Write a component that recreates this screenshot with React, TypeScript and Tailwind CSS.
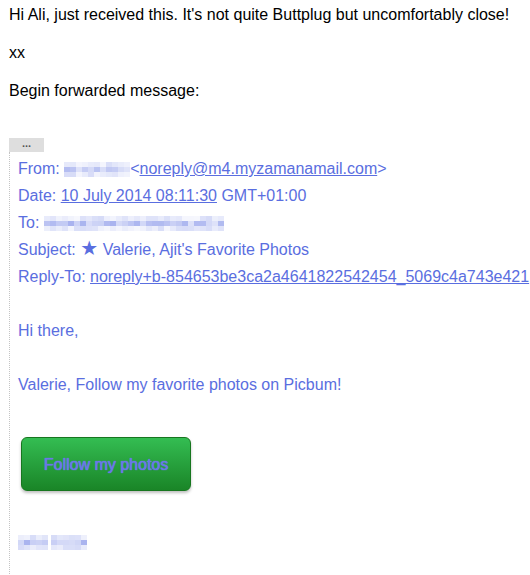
const BLUE = "text-[#5a6ee0]";

// blocky "pixelated" redaction, drawn as small squares
function Pixelated({ cols, rows, seed, cw = 6, ch = 5, className }: { cols: number; rows: number; seed: number; cw?: number; ch?: number; className?: string }) {
  const cells: { x: number; y: number; o: number }[] = [];
  let s = seed;
  for (let y = 0; y < rows; y++) {
    for (let x = 0; x < cols; x++) {
      s = (s * 9301 + 49297) % 233280;
      const r = s / 233280;
      const edge = y === 0 || y === rows - 1;
      cells.push({ x, y, o: edge ? 0.05 + r * 0.2 : 0.18 + r * 0.35 });
    }
  }
  return (
    <svg width={cols * cw} height={rows * ch} className={className}>
      {cells.map((c, i) => (
        <rect key={i} x={c.x * cw} y={c.y * ch} width={cw} height={ch} fill="#5a6ee0" opacity={c.o} />
      ))}
    </svg>
  );
}

export default function App() {
  return (
    <div className="h-[575px] w-[530px] overflow-hidden bg-white font-['Helvetica','Liberation_Sans',Arial,sans-serif] text-[16px] text-black">
      <div className="pl-[9px] pt-[5px] leading-[19px]">
        <div>Hi Ali, just received this. It's not quite Buttplug but uncomfortably close!</div>
        <div>&nbsp;</div>
        <div>xx</div>
        <div>&nbsp;</div>
        <div>Begin forwarded message:</div>
      </div>

      <div className="ml-[9px] mt-[38px] flex h-[14px] w-[35px] items-start justify-center bg-[#dedede] text-[11px] font-bold leading-[10px] text-[#555]">
        ...
      </div>

      <div className={`ml-[9px] h-[600px] whitespace-nowrap border-l border-dotted border-[#c4c4c4] pl-[8px] pt-[3px] leading-[27px] ${BLUE}`}>
        <div className="flex items-center">
          From:&nbsp;
          <Pixelated cols={11} rows={3} seed={7} className="mt-[1px]" />
          <span>&lt;</span>
          <span className="underline">noreply@m4.myzamanamail.com</span>
          <span>&gt;</span>
        </div>
        <div>
          Date: <span className="underline">10 July 2014 08:11:30</span> GMT+01:00
        </div>
        <div className="flex items-center">
          To:&nbsp;
          <Pixelated cols={30} rows={3} seed={31} className="mt-[2px]" />
        </div>
        <div>
          Subject: <span className="font-['DejaVu_Sans',sans-serif] text-[20px] leading-none">★</span> Valerie, Ajit's Favorite Photos
        </div>
        <div>
          Reply-To: <span className="underline">noreply+b-854653be3ca2a4641822542454_5069c4a743e421</span>
        </div>
        <div>&nbsp;</div>
        <div>Hi there,</div>
        <div>&nbsp;</div>
        <div>Valerie, Follow my favorite photos on Picbum!</div>
        <div>&nbsp;</div>

        <div className="ml-[3px] mt-[12px] flex h-[54px] w-[170px] items-center justify-center rounded-[6px] border border-[#17761f] bg-gradient-to-b from-[#34bd52] to-[#1a8527] shadow-[0_2px_3px_rgba(0,0,0,0.25)]">
          <span className="text-[16px] text-[#6a78e8] [text-shadow:0_0_1px_#6a78e8,0_0_1px_#6a78e8]">Follow my photos</span>
        </div>

        <div className="mt-[44px] flex gap-[3px]">
          <Pixelated cols={5} rows={3} seed={3} />
          <Pixelated cols={6} rows={3} seed={19} />
        </div>
      </div>
    </div>
  );
}
